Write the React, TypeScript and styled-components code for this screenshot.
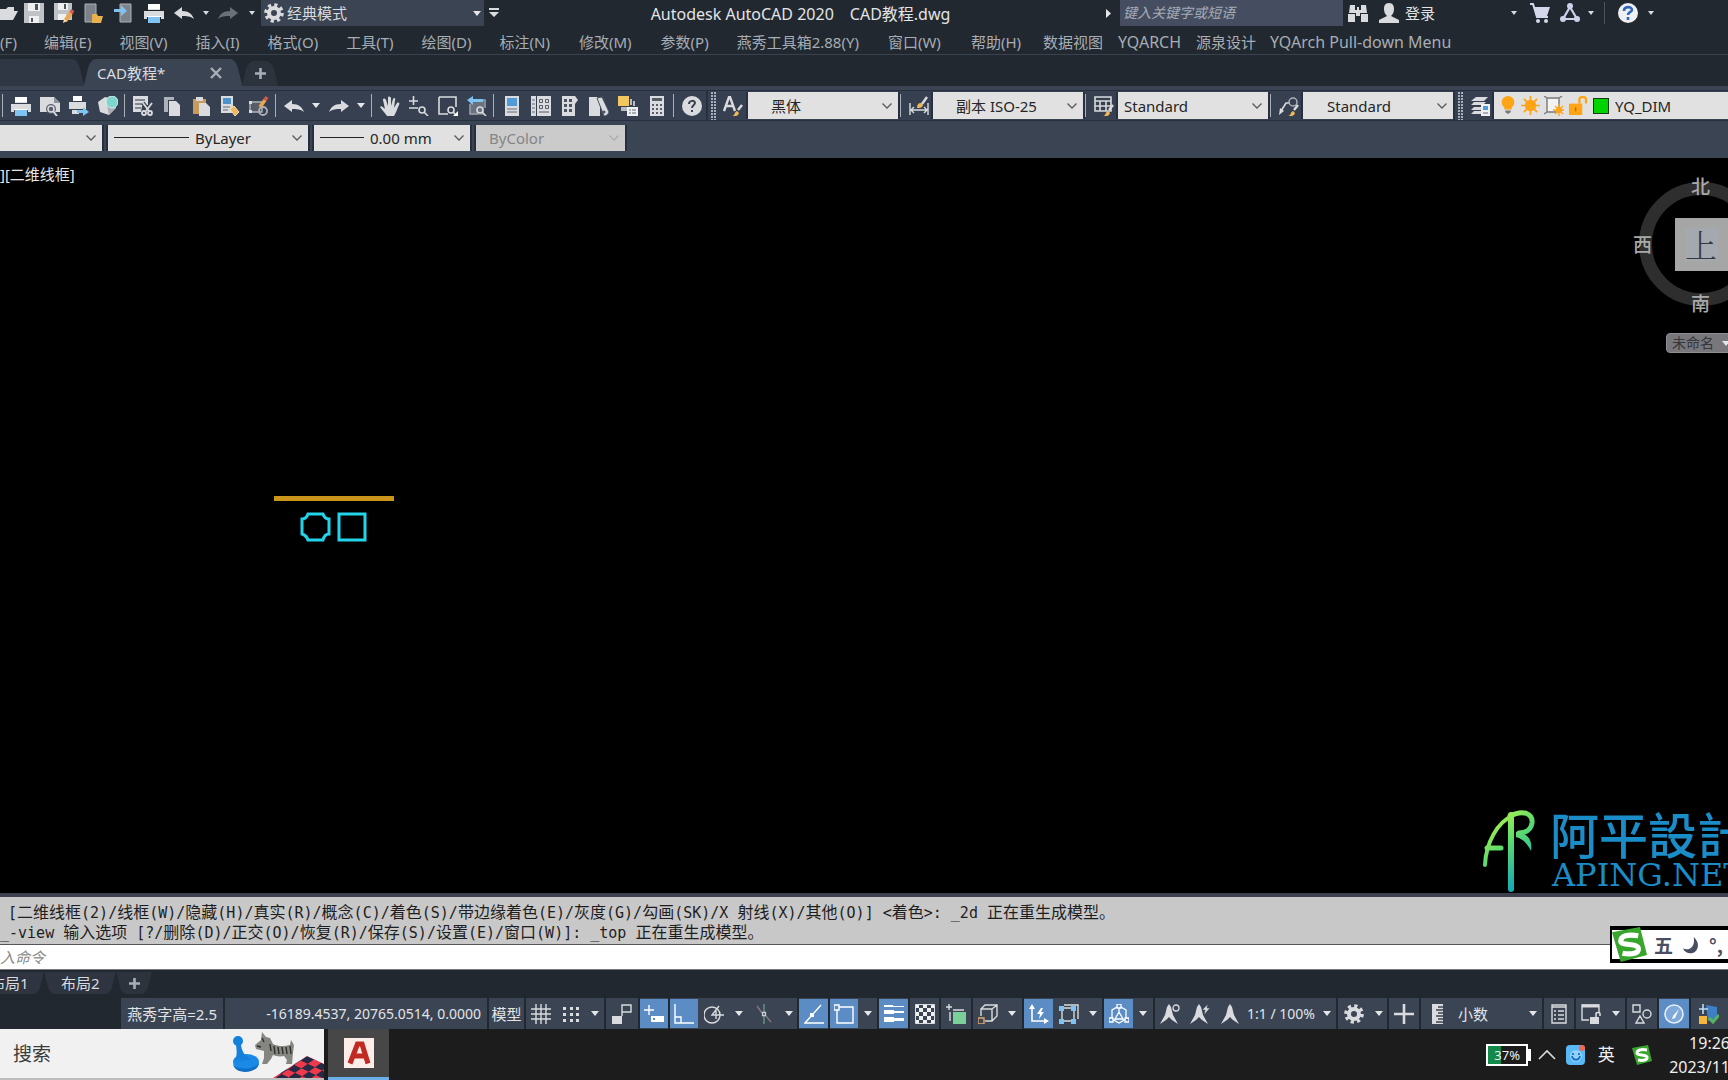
import React from "react";
import styled, { createGlobalStyle, css } from "styled-components";

const UI = `"Noto Sans", "Noto Sans CJK SC", sans-serif`;
const MONO = `"DejaVu Sans Mono", "Noto Sans CJK SC", monospace`;
const L = "#d9dbde";
const B = "#7fc3f2";
const O = "#efb65c";
const CHROME = "#212830";
const PANEL = "#3b4453";

const Global = createGlobalStyle`
  * { box-sizing: border-box; }
  html, body { margin: 0; height: 100%; overflow: hidden; background: #000; }
  button, input, select { font: inherit; color: inherit; border: 0; background: none; padding: 0; margin: 0; outline: 0; }
  button { white-space: nowrap; }
  select { appearance: none; }
  svg { display: block; flex: none; }
`;

const printer = (
  <>
    <path fill={L} d="M4 1h12v6H4z" />
    <path fill={L} d="M0 8h20v8h-3v-3H3v3H0z" />
    <path fill="#fff" d="M4 1h12v5H4z" />
    <path fill="#fff" d="M3 13h14v1H3z" />
    <path fill={B} d="M4 14h12v6H4z" />
  </>
);
const brush = (
  <>
    <path stroke={L} strokeWidth="2.4" d="M19 9l-4 5" />
    <path fill={O} d="M9 20c3 0 2-4 5-5l2 2c-1 3-4 4-7 3z" />
  </>
);
const pencil = (
  <>
    <path stroke="#e9a64e" strokeWidth="4" d="M11 18l6-8" />
    <path stroke="#d95745" strokeWidth="4" d="M17 10l2-3" />
    <path fill="#f3e2c4" d="M9 20l1-4 3 2z" />
  </>
);
const magnifier = (
  <g fill="none" stroke={L} strokeWidth="1.6">
    <circle cx="13" cy="14" r="3" />
    <path d="M15 16l4 4" />
  </g>
);
const undo = <path fill={L} d="M0 10l8-6v4c7 0 10 3 12 8-4-3-7-3-12-3v3z" />;
const redo = <path fill={L} d="M20 10l-8-6v4C5 8 2 11 0 16c4-3 7-3 12-3v3z" />;
const gear = (
  <>
    <circle cx="10" cy="10" r="5" fill="none" stroke={L} strokeWidth="4" />
    <circle cx="10" cy="10" r="8" fill="none" stroke={L} strokeWidth="3.6" strokeDasharray="3.2 3.08" />
  </>
);
const person = (
  <path fill={L} d="M10 0l2 3 2 8 5 9-6-4-3-3-3 3-6 4 5-9 2-8z" />
);

const icons: Record<string, React.ReactNode> = {
  folder: <path fill={L} d="M0 6h8l2-2h6v4h4l-5 9H0z" />,
  save: (
    <>
      <path fill="#bfc2c6" d="M0 0h20v20H0z" />
      <path fill="#eef0f2" d="M4 0h12v8H4zM5 13h10v7H5z" />
      <path fill="#50565f" d="M11 1h3v6h-3zM7 15h2v4H7z" />
    </>
  ),
  saveAs: (
    <>
      <path fill="#bfc2c6" d="M0 0h18v17H0z" />
      <path fill="#eef0f2" d="M4 0h10v7H4zM4 11h8v6H4z" />
      <path fill="#50565f" d="M10 1h2v5h-2z" />
      {pencil}
    </>
  ),
  openMobile: (
    <>
      <path fill="#7d828a" stroke="#aeb2b8" d="M2 1h11v18H2z" />
      <path fill="#e8b14e" d="M9 11h5l1 2h5l-2 7H9z" />
    </>
  ),
  saveMobile: (
    <>
      <path fill="#7d828a" stroke="#aeb2b8" d="M6 1h11v18H6z" />
      <path fill={B} d="M0 6h7V2l6 6-6 5V9H0z" />
    </>
  ),
  print: printer,
  undo,
  redo,
  redoDim: <g opacity=".4">{redo}</g>,
  gear,
  preview: (
    <>
      <path fill={L} d="M0 1h14l6 6v9H0z" />
      <path fill="#8d939c" d="M14 1l6 6h-6z" />
      <circle cx="11" cy="13" r="5" fill="#59616e" />
      <circle cx="11" cy="13" r="3" fill="none" stroke={L} strokeWidth="1.6" />
      <path stroke={L} strokeWidth="2" d="M13 15l4 5" />
    </>
  ),
  plot: (
    <>
      <path fill="#fff" d="M4 0h9v5H4z" />
      <path fill={L} d="M0 6h17v7H0zM3 14h7v4H3z" />
      <path fill={B} d="M8 14h6v-3l6 5-6 4v-3H8z" />
    </>
  ),
  cube3d: (
    <>
      <path fill={L} d="M0 6l7-5 8 2 3 9-7 7-9-3z" />
      <path fill="#a9adb2" d="M9 9l9 2-7 8z" />
      <circle cx="14" cy="6" r="6" fill="#7fd6cf" stroke="#d7efec" />
    </>
  ),
  cut: (
    <>
      <path fill={L} d="M0 0h15v9l-6 1-1 6H0z" />
      <path stroke="#666d77" strokeWidth="1.4" d="M2 4h10M2 8h8M2 12h6" />
      <g fill="none" stroke={L} strokeWidth="1.8">
        <path stroke={PANEL} strokeWidth="4" d="M10 7l6 8M19 7l-6 8" />
        <path d="M10 7l6 8M19 7l-6 8" />
        <circle cx="11" cy="17" r="2" />
        <circle cx="17" cy="17" r="2" />
      </g>
    </>
  ),
  copy: (
    <>
      <path fill="#aeb2b8" d="M2 1h10v3H6v12H2z" />
      <path fill={L} d="M7 5h7l4 4v11H7z" />
    </>
  ),
  paste: (
    <>
      <path fill="#c79a5e" d="M2 3h13v15H2z" />
      <path fill={L} d="M5 1h7v4H5zM8 7h7l4 4v9H8z" />
    </>
  ),
  match: (
    <>
      <path fill={L} d="M1 0h12v17H1z" />
      <path fill="#4b93cf" d="M3 2h8v6H3z" />
      <path stroke="#666d77" d="M3 11h7M3 14h5" />
      <path fill={O} stroke="#f4ddb3" d="M10 13l4-3 5 6-4 4z" />
    </>
  ),
  blockEdit: (
    <>
      <path fill="#565d69" stroke="#aeb2b8" strokeWidth="1.4" d="M1 6h12v10H1z" />
      <path fill={L} d="M0 5h3v3H0zM0 14h3v3H0z" />
      <circle cx="14" cy="15" r="4" fill="none" stroke="#aeb2b8" strokeWidth="1.8" />
      <path stroke="#e9a64e" strokeWidth="3.6" d="M11 11l5-7" />
      <path stroke="#d95745" strokeWidth="3.6" d="M16 4l2-3" />
    </>
  ),
  hand: (
    <path
      fill={L}
      d="M7 20c-2-3-5-6-7-9 1-2 3 0 5 2L3 4c0-2 2-2 3 0l2 6V2c0-2 2-2 3 0v8l2-7c1-2 3-1 2 1l-1 8 3-5c2-1 3 0 2 2-2 4-3 8-5 11z"
    />
  ),
  zoomPm: (
    <>
      <path stroke={L} strokeWidth="1.6" d="M0 5h9M4.500 0v9M0 12h9" />
      {magnifier}
    </>
  ),
  zoomWin: (
    <>
      <path fill="none" stroke={L} strokeWidth="1.6" d="M1 1h17v10M1 1v17h9" />
      {magnifier}
      <path fill="#fff" d="M20 15v5h-5z" />
    </>
  ),
  zoomPrev: (
    <>
      <path fill="#6b727d" d="M3 5h14v14H3z" />
      <path fill="none" stroke="#979da6" strokeWidth="1.6" d="M10 4h8v8M3 8v10h8" />
      <path fill={B} d="M0 4l6-4v3h10v3H6v3z" />
      {magnifier}
    </>
  ),
  props: (
    <>
      <path fill={L} d="M3 0h14v20H3z" />
      <path fill="#4f9ad8" d="M5 2h10v8H5z" />
      <path stroke="#666d77" d="M5 13h10M5 16h10" />
    </>
  ),
  designCenter: (
    <>
      <path fill={L} d="M0 0h5v20H0zM6 0h14v20H6z" />
      <path stroke="#666d77" d="M1 4h3M1 8h3M1 12h3M1 16h3" />
      <path fill="none" stroke="#555d69" d="M8.500 3.500h3v3h-3zM14.500 3.500h3v3h-3zM8.500 9.500h3v3h-3zM14.500 9.500h3v3h-3zM8 16h10" />
    </>
  ),
  palettes: (
    <>
      <path fill={L} d="M2 0h13l3 4-3 4v12H2z" />
      <path fill="#4c5461" d="M4 3h3v3H4zM9 3h3v3H9zM4 8h3v3H4zM9 8h3v3H9zM4 13h3v3H4zM9 13h3v3H9z" />
    </>
  ),
  sheetSet: (
    <>
      <path fill={L} d="M0 1h8l3 3v16H0z" />
      <path fill={L} stroke="#4c5461" d="M8 2l5-1 7 15c-1 3-3 4-5 4z" />
      <circle cx="15" cy="16" r="1.500" fill="#4c5461" />
    </>
  ),
  markup: (
    <>
      <path fill="#f3c65f" d="M0 0h11v10H0z" />
      <path fill="#b9bdc2" d="M3 11h7v4H3zM12 3h2v6h-2zM15 5h2v5h-2z" />
      <path fill="#eef0f2" d="M9 11h11v9H9z" />
      <path stroke="#666d77" d="M11 14h2M14 14h4M11 17h2M14 17h4" />
    </>
  ),
  calc: (
    <>
      <path fill={L} d="M3 0h14v20H3z" />
      <path fill="#555d69" d="M5 2h10v3H5zM5 8h2v2H5zM9 8h2v2H9zM13 8h2v2h-2zM5 12h2v2H5zM9 12h2v2H9zM13 12h2v2h-2zM5 16h2v2H5zM9 16h2v2H9zM13 16h2v2h-2z" />
    </>
  ),
  helpRound: (
    <>
      <circle cx="10" cy="10" r="10" fill={L} />
      <path fill="none" stroke="#39424f" strokeWidth="2" d="M7 8c0-4 6-4 6-1 0 2-3 2-3 5M10 14v2" />
    </>
  ),
  textStyle: (
    <>
      <path fill="none" stroke={L} strokeWidth="2.400" d="M1 15L6 1h1l5 14M3 10h7" />
      {brush}
    </>
  ),
  dimStyle: (
    <>
      <path fill="none" stroke={L} strokeWidth="1.400" d="M1 7v12M19 7v12M2 14h16M5 11l-3 3 3 3M15 11l3 3-3 3" />
      <path fill={O} d="M8 12c0-4 2-5 4-5l2 2c-1 3-3 3-6 3z" />
      <path stroke={L} strokeWidth="2.400" d="M13 8l5-7" />
    </>
  ),
  tableStyle: (
    <>
      <path fill="none" stroke={L} strokeWidth="1.600" d="M1 1h16v14H1zM1 5h16M1 10h16M6 5v10M12 5v10" />
      {brush}
    </>
  ),
  leaderStyle: (
    <>
      <path fill="none" stroke={L} strokeWidth="1.600" d="M2 15l5-8h4" />
      <path fill={L} d="M0 19l1-7 4 3z" />
      <circle cx="14" cy="6" r="4" fill="none" stroke="#aeb2b8" strokeWidth="1.500" />
      {brush}
    </>
  ),
  layers: (
    <>
      <path fill={L} d="M6 1h12l-4 4H1zM4 6h12l-3 3H1zM4 11h7v3H1zM4 15h7v3H1z" />
      <path fill="#eef0f2" d="M11 8h9v12h-9z" />
      <path fill="#4f9ad8" d="M13 10h5v4h-5z" />
      <path stroke="#666d77" d="M13 17h5" />
    </>
  ),
  bulb: (
    <>
      <circle cx="10" cy="7" r="7" fill="#ffa415" />
      <path fill="#ffa415" d="M6 11h8v4H6z" />
      <path fill="#77797c" d="M7 16h6v2l-3 2-3-2z" />
    </>
  ),
  sun: (
    <>
      <circle cx="10" cy="10" r="6" fill="#ffa415" />
      <path stroke="#ffa415" strokeWidth="1.800" d="M10 0v20M0 10h20M3 3l14 14M17 3L3 17" />
    </>
  ),
  vpFreeze: (
    <>
      <path fill="#f3f3f3" stroke="#77797c" strokeWidth="1.400" d="M3 2h12v14H3zM0 0l3 2M18 0l-3 2M0 18l3-2" />
      <circle cx="15" cy="14" r="3" fill="#ffa415" />
      <path stroke="#ffa415" strokeWidth="1.300" d="M15 8v12M9 14h11M11 10l8 8M19 10l-8 8" />
    </>
  ),
  unlock: (
    <>
      <path fill="#ffa415" d="M1 8h14v12H1z" />
      <path fill="none" stroke="#ffa415" strokeWidth="2.400" d="M12 8V4c0-4 7-4 7 0v4" />
      <path stroke="#b36f00" strokeWidth="1.500" d="M8 12v4" />
    </>
  ),
  binoculars: (
    <>
      <path fill={L} d="M2 2h5v5h2V4h2v3h2V2h5l1 8H1z" />
      <path fill={L} d="M0 11h7v8H0zM13 11h7v8h-7zM8 8h4v5H8z" />
    </>
  ),
  user: (
    <path fill={L} d="M10 0c4 0 5 3 5 6s-1 5-3 7l8 4v3H0v-3l8-4C6 11 5 9 5 6s1-6 5-6z" />
  ),
  cart: (
    <>
      <path fill="#d5d8ea" d="M4 4h16l-3 9H6z" />
      <path fill="none" stroke="#d5d8ea" strokeWidth="2" d="M0 1h3l4 13h11" />
      <circle cx="8" cy="18" r="2" fill="#d5d8ea" />
      <circle cx="16" cy="18" r="2" fill="#d5d8ea" />
    </>
  ),
  a360: (
    <>
      <path fill="none" stroke="#cdd1ea" strokeWidth="2.200" d="M10 4l7 12H3z" />
      <circle cx="10" cy="3" r="3" fill="#cdd1ea" />
      <circle cx="3" cy="16" r="3" fill="#cdd1ea" />
      <circle cx="17" cy="16" r="3" fill="#cdd1ea" />
    </>
  ),
  help: (
    <>
      <circle cx="10" cy="10" r="10" fill="#eef0f4" />
      <path fill="none" stroke="#2f66b8" strokeWidth="2.600" d="M6 8c0-5 8-5 8-1 0 2-4 2-4 5M10 14v3" />
    </>
  ),
  grid: <path stroke={L} strokeWidth="1.400" d="M5 0v20M10 0v20M15 0v20M0 5h20M0 10h20M0 15h20" />,
  dots: (
    <path fill={L} d="M2 3h3v3H2zM9 3h3v3H9zM15 3h3v3h-3zM2 9h3v3H2zM9 9h3v3H9zM15 9h3v3h-3zM2 15h3v3H2zM9 15h3v3H9zM15 15h3v3h-3z" />
  ),
  infer: (
    <>
      <path fill={L} d="M0 12h10v8H0z" />
      <path fill="none" stroke={L} strokeWidth="1.400" d="M10 12V1h9v7h-9" />
    </>
  ),
  dynInput: (
    <>
      <path stroke="#fff" strokeWidth="1.400" d="M0 6h10M5 1v10" />
      <path fill="#fff" d="M7 12h13v6H7z" />
      <path fill="#5b8cc4" d="M9 14h2v2H9z" />
    </>
  ),
  ortho: <path fill="none" stroke="#fff" strokeWidth="1.400" d="M1 0v19h19M1 13h6v6" />,
  polar: (
    <g fill="none" stroke={L} strokeWidth="1.400">
      <circle cx="8" cy="11" r="8" />
      <path d="M15 2l-7 9h12M12 6v9" />
    </g>
  ),
  iso: (
    <>
      <path stroke="#8a7780" strokeWidth="1.300" d="M3 2l5 7M12 12l5 6" />
      <path stroke="#6d9a8e" strokeWidth="1.300" d="M10 0v8M10 12v8" />
      <path fill="none" stroke="#c9ccd1" strokeWidth="1.300" d="M8.500 8.500h3v3h-3z" />
    </>
  ),
  track: (
    <>
      <path fill="none" stroke="#fff" strokeWidth="1.400" d="M17 1L1 19h19" />
      <path fill="#fff" d="M6 9h4v4H6z" />
    </>
  ),
  osnap: <path fill="none" stroke="#fff" strokeWidth="1.400" d="M0 1h5v5H0zM5 3h14v16H3V6" />,
  lineweight: (
    <path fill="#fff" d="M0 1h9v2H0zM9 2h11v1H9zM0 6h10v4H0zM10 7h10v2H10zM0 13h10v5H0zM10 14h10v3H10z" />
  ),
  checker: (
    <>
      <defs>
        <pattern id="check" width="8" height="8" patternUnits="userSpaceOnUse">
          <path fill="#eef0f2" d="M0 0h4v4H0zM4 4h4v4H4z" />
        </pattern>
      </defs>
      <path fill="url(#check)" stroke={L} d="M.5.5h19v19H.5z" />
    </>
  ),
  cycle: (
    <>
      <path fill="#7bd09a" d="M7 8h13v12H7z" />
      <path fill="none" stroke={L} strokeWidth="1.400" d="M4 8v9M7 6h11M0 3h6M3 0v6" />
    </>
  ),
  osnap3d: (
    <>
      <path fill="none" stroke={L} strokeWidth="1.400" d="M3 12V5h11v12H7M3 5l4-4h12v11l-5 5M14 5l5-4" />
      <path fill="none" stroke="#e0a672" strokeWidth="1.400" d="M0 14h6v6H0z" />
    </>
  ),
  ucs: (
    <>
      <path fill="none" stroke="#fff" strokeWidth="1.600" d="M3 4v13h13" />
      <path fill="#fff" d="M3 0l3 5H0zM20 17l-5 3v-6zM12 4l-4 6h3l-1 5 5-7h-3l2-4z" />
    </>
  ),
  filter3d: (
    <>
      <path fill="none" stroke={L} strokeWidth="1.400" d="M3 4h12v13H3zM5 1h14v14" />
      <path fill={B} d="M0 2h5v5H0zM12 2h5v5h-5zM0 15h5v5H0zM12 15h5v5h-5z" />
    </>
  ),
  gizmo: (
    <>
      <path fill="none" stroke="#fff" strokeWidth="1.300" d="M10 2l7 4v9l-7 4-7-4V6zM10 8l4 7H6zM10 8V3M6 15l-4 2M14 15l4 2" />
      <path fill="#5b8cc4" stroke="#fff" strokeWidth="1.300" d="M8 0h4v4H8zM0 14h4v4H0zM16 14h4v4h-4z" />
    </>
  ),
  annoVis: (
    <>
      <g transform="translate(-1 0)">{person}</g>
      <circle cx="16" cy="4" r="3" fill={PANEL} stroke={L} strokeWidth="1.300" />
    </>
  ),
  annoAuto: (
    <>
      <g transform="translate(-1 0)">{person}</g>
      <path fill={L} stroke={PANEL} strokeWidth=".6" d="M18 0l-6 6h3l-1 5 6-7h-3z" />
    </>
  ),
  anno: person,
  plus: <path stroke={L} strokeWidth="2.600" d="M10 0v20M0 10h20" />,
  ruler: (
    <>
      <path fill={L} d="M5 0h11v20H5z" />
      <path stroke={PANEL} strokeWidth="1.400" d="M11 3h5M9 6h7M11 9h5M9 12h7M11 15h5M9 18h7" />
    </>
  ),
  quickProps: (
    <>
      <path fill="none" stroke={L} strokeWidth="1.400" d="M3 1h14v18H3z" />
      <path stroke={L} strokeWidth="1.600" d="M3 3h14M5 7h2M9 7h6M5 11h2M9 11h6M5 15h2M9 15h6" />
    </>
  ),
  lockUi: (
    <>
      <path fill="none" stroke={L} strokeWidth="1.400" d="M8 16H1V1h17v8" />
      <path stroke={L} strokeWidth="3" d="M1 2h17" />
      <path fill={L} d="M9 13h9v7H9z" />
      <path fill="none" stroke={L} strokeWidth="1.600" d="M15 13v-3c0-2 4-2 4 0v2" />
    </>
  ),
  isolate: (
    <g fill="none" stroke={L} strokeWidth="1.400">
      <path d="M1 1h7v7H1zM8 12l4 7H4z" />
      <circle cx="15" cy="10" r="4" />
    </g>
  ),
  perf: (
    <>
      <circle cx="10" cy="10" r="9" fill="#7fa9d8" stroke="#e4eefa" strokeWidth="1.600" />
      <path fill="#fff" d="M15 5l-4 9-3 1 1-3z" />
    </>
  ),
  clean: (
    <>
      <path fill="#3f7fc4" d="M7 1l11 2v12l-9 2z" />
      <path stroke="#bcdcf6" strokeWidth="1.600" d="M0 5h9M4 0v10" />
      <path fill="#f5b63c" d="M0 12h8v8H0z" />
      <path fill="none" stroke="#56b35c" strokeWidth="3" d="M10 14l4 4 6-7" />
    </>
  ),
  chevronUp: <path fill="none" stroke={L} strokeWidth="1.600" d="M2 14l8-8 8 8" />,
  smile: (
    <>
      <rect width="19" height="20" rx="4" fill="#59b9f4" />
      <circle cx="10" cy="11" r="6" fill="#8fd3fa" />
      <path fill="none" stroke="#1c6fc0" strokeWidth="1.800" d="M6 11c1 5 7 5 8 0M7 8v2M13 8v2" />
      <circle cx="16" cy="3" r="3" fill="#ee6a4f" />
    </>
  ),
  sogou: (
    <>
      <path fill="#38a52c" d="M0 3l16-3 4 16-15 4z" />
      <path fill="none" stroke="#fff" strokeWidth="3" d="M15 5C9 4 5 5 5 8s9 1 10 4-4 4-9 3" />
    </>
  ),
  moon: <path fill="#4a4e63" d="M13 1c7 6 6 15-1 18-5 1-9-1-11-5 8 3 14-3 12-13z" />,
  autocad: (
    <>
      <path fill="#fbeee8" d="M0 0h20v20H0z" />
      <path fill="none" stroke="#c02a22" strokeWidth="3.400" d="M4 17L9 4h3l4 13M6 12h8" />
    </>
  ),
};

const Icon = ({ name, size = 20 }: { name: string; size?: number }) => (
  <svg width={size} height={size} viewBox="0 0 20 20" fill="none" aria-hidden="true">
    {icons[name]}
  </svg>
);
const Caret = () => (
  <svg width="8" height="5" viewBox="0 0 8 5" aria-hidden="true">
    <path fill="#e4e6e9" d="M0 0h8L4 5z" />
  </svg>
);
const SmallCaret = () => (
  <svg width="6" height="4" viewBox="0 0 6 4" aria-hidden="true">
    <path fill="#d9dbde" d="M0 0h6L3 4z" />
  </svg>
);

const Page = styled.div`
  display: flex;
  flex-direction: column;
  height: 100vh;
  overflow: hidden;
  background: #000;
  font: 15px/20px ${UI};
  color: #d9dbde;
`;
const Cell = styled.button<{ $w?: number; $on?: boolean }>`
  flex: none;
  display: flex;
  align-items: center;
  justify-content: center;
  width: ${(p) => p.$w ?? 29}px;
  height: 100%;
  ${(p) => p.$on && css`background: #5b8cc4; box-shadow: inset 0 -1px #3b4453, inset 0 1px #3b4453;`}
`;

/* title bar */
const TitleBar = styled.header`
  display: flex;
  height: 26px;
  background: ${CHROME};
`;
const Workspace = styled.label`
  flex: none;
  display: flex;
  align-items: center;
  gap: 3px;
  width: 223px;
  padding: 0 3px;
  background: ${PANEL};
  select { flex: 1; }
`;
const Title = styled.h1`
  flex: 1;
  display: flex;
  justify-content: center;
  align-items: center;
  gap: 16px;
  margin: 0;
  padding-top: 2px;
  font: inherit;
  font-size: 16px;
  color: #e2e4e7;
`;
const SearchBox = styled.input`
  width: 223px;
  padding: 0 3px;
  background: #454e60;
  font-size: 14px;
  font-style: italic;
  &::placeholder { color: #a4abb8; opacity: 1; }
`;
const Account = styled.button`
  display: flex;
  align-items: center;
  justify-content: space-between;
  width: 120px;
  padding-right: 8px;
  color: #e2e4e7;
`;
const Rule = styled.i`
  width: 1px;
  height: 22px;
  margin: 2px 7px 0;
  background: #4b535f;
`;
const TitleEnd = styled.div`
  width: 70px;
`;

/* menus */
const MenuBar = styled.nav`
  display: flex;
  height: 29px;
  padding-top: 3px;
  background: ${CHROME};
  border-bottom: 1px solid #3a424d;
  color: #a7adb4;
`;
const MenuItem = styled.button<{ $gap: number; $latin: boolean }>`
  flex: none;
  margin-right: ${(p) => p.$gap}px;
  font-size: ${(p) => (p.$latin ? 16 : 15)}px;
`;

/* file tabs */
const TabRow = styled.div<{ $flip?: boolean }>`
  display: flex;
  align-items: ${(p) => (p.$flip ? "flex-start" : "flex-end")};
  height: ${(p) => (p.$flip ? 28 : 31)}px;
  padding-top: ${(p) => (p.$flip ? 2 : 0)}px;
  background: ${CHROME};
`;
const Tab = styled.div<{ $w: number; $h: number; $bg: string; $flip?: boolean; $first?: boolean }>`
  position: relative;
  z-index: 0;
  flex: none;
  display: flex;
  align-items: center;
  justify-content: space-between;
  width: ${(p) => p.$w}px;
  height: ${(p) => p.$h}px;
  &::before, &::after {
    content: "";
    position: absolute;
    z-index: -1;
    inset: 0 8px 0 ${(p) => (p.$first ? -12 : 3)}px;
    background: ${(p) => p.$bg};
    border-radius: ${(p) => (p.$flip ? "0 0 6px 6px" : "8px 8px 0 0")};
    transform: skewX(${(p) => (p.$flip ? 14 : -14)}deg);
  }
  &::after {
    inset: 0 3px 0 8px;
    transform: skewX(${(p) => (p.$flip ? -14 : 14)}deg);
  }
`;
const TabLabel = styled.button<{ $start: number }>`
  margin: 0 auto 0 ${(p) => p.$start}px;
  color: #d9dbde;
`;
const TabIcon = styled.button`
  display: flex;
  margin: 0 auto;
`;
const TabClose = styled.button`
  margin-right: 20px;
`;

/* toolbars */
const Toolbars = styled.section`
  display: flex;
  flex-direction: column;
  gap: 5px;
  padding: 5px 0 7px;
  background: ${PANEL};
`;
const Toolbar = styled.div`
  display: flex;
  height: 29px;
  background: #374050;
  box-shadow: 0 0 0 1px #273040;
`;
const PropBar = styled.div`
  display: flex;
  gap: 6px;
  height: 26px;
`;
const Sep = styled.i`
  flex: none;
  width: 6px;
  margin: 3px 0;
  background: linear-gradient(#aab0b8, #aab0b8) 2px 0 / 1px 100% no-repeat;
`;
const Grip = styled.i`
  flex: none;
  width: 12px;
  border-left: 2px solid #273040;
  background: radial-gradient(circle at 1px 1px, #a9afb8 1px, transparent 1px) 3px 4px / 3px 3px repeat-y,
    radial-gradient(circle at 1px 1px, #a9afb8 1px, transparent 1px) 6px 4px / 3px 3px repeat-y;
`;
const ComboBox = styled.label<{ $w?: number; $pad: number; $off?: boolean }>`
  flex: ${(p) => (p.$w ? "none" : "1")};
  display: flex;
  align-items: center;
  gap: 6px;
  width: ${(p) => (p.$w ? `${p.$w}px` : "auto")};
  height: 27px;
  margin-top: 1px;
  padding: 0 5px 0 ${(p) => p.$pad}px;
  background: ${(p) => (p.$off ? "#cbcbcb" : "#e1e1e1")};
  color: ${(p) => (p.$off ? "#858585" : "#262626")};
  box-shadow: 2px 0 #273040, -2px 0 #273040;
  select { flex: 1; min-width: 0; opacity: 1; }
  ${PropBar} & { height: 26px; margin: 0; }
`;
const Swatch = styled.i`
  width: 16px;
  height: 16px;
  border: 1px solid #1b3a1b;
  background: #00d400;
`;
const LayerIcons = styled.span`
  display: flex;
  gap: 4px;
`;

type ComboProps = { label: string; value: string; w?: number; pad: number; off?: boolean; line?: number; children?: React.ReactNode; open?: boolean };
const Combo = ({ label, value, w, pad, off, line, children, open }: ComboProps) => (
  <ComboBox $w={w} $pad={pad} $off={off}>
    {line && (
      <svg width={line} height="2" aria-hidden="true">
        <path stroke="#222" strokeWidth="1" d={`M0 .5h${line}`} />
      </svg>
    )}
    {children}
    <select aria-label={label} disabled={off}>
      <option>{value}</option>
    </select>
    {!open && (
      <svg width="12" height="8" viewBox="0 0 12 8" aria-hidden="true">
        <path fill="none" stroke={off ? "#adadad" : "#5a5a5a"} strokeWidth="1.300" d="M1.500 1.500L6 6l4.500-4.500" />
      </svg>
    )}
  </ComboBox>
);

/* drawing area */
const Canvas = styled.main`
  position: relative;
  flex: 1;
  min-height: 0;
  overflow: hidden;
  background: #000;
`;
const ViewLabel = styled.button`
  position: absolute;
  left: 0;
  top: 6px;
  color: #e6e6e6;
`;
const Entities = styled.svg`
  position: absolute;
  left: 274px;
  top: 337px;
`;
const ViewCube = styled.div`
  position: absolute;
  right: -35px;
  top: 24px;
  width: 124px;
  height: 124px;
  border: 13px solid #2e2e2e;
  border-radius: 50%;
  display: grid;
  place-items: center;
`;
const CubeFace = styled.button`
  width: 53px;
  height: 53px;
  border: 10px solid #a6a6a6;
  background: #a3a9af;
  color: #33393f;
  font: 32px/32px "Noto Serif CJK SC", "Noto Sans CJK SC", serif;
  font-weight: 300;
`;
const Compass = styled.button<{ $x: number; $y: number }>`
  position: absolute;
  left: ${(p) => p.$x}px;
  top: ${(p) => p.$y}px;
  font: 500 19px/20px "Noto Sans CJK SC", sans-serif;
  color: #a9a9a9;
`;
const UcsMenu = styled.button`
  position: absolute;
  right: -8px;
  top: 175px;
  display: flex;
  align-items: center;
  gap: 8px;
  width: 70px;
  height: 20px;
  padding-left: 5px;
  border: 1px solid #8e8e93;
  border-radius: 4px;
  background: #77777c;
  color: #36363c;
  font-size: 14px;
`;
const Watermark = styled.div`
  position: absolute;
  right: -24px;
  bottom: 0;
  display: flex;
  gap: 14px;
  width: 269px;
  height: 83px;
  color: #1a8dc8;
`;
const MarkText = styled.div`
  flex: none;
  white-space: nowrap;
`;
const MarkName = styled.div`
  font: 500 49px/46px "Noto Sans CJK TC", sans-serif;
`;
const MarkUrl = styled.div`
  padding-left: 2px;
  font: 32px/38px "DejaVu Serif", serif;
`;

/* command window */
const CommandArea = styled.section`
  position: relative;
  flex: none;
  border-top: 4px solid #3c404c;
  background: #c8c8c8;
`;
const History = styled.div`
  height: 48px;
  padding-top: 6px;
  border-bottom: 1px solid #55565a;
  color: #1e1e1e;
  font: 15px/20px ${MONO};
`;
const HistoryLine = styled.p<{ $indent: number }>`
  height: 20px;
  margin: 0;
  padding-left: ${(p) => p.$indent}px;
  white-space: pre;
  overflow: hidden;
`;
const Han = styled.span`
  font-size: 16px;
`;
const CommandInput = styled.input`
  display: block;
  width: 100%;
  height: 25px;
  background: #fff;
  border-bottom: 1px solid #77797e;
  font-style: italic;
  &::placeholder { color: #8a8a8a; opacity: 1; }
`;
const Ime = styled.div`
  position: absolute;
  right: 0;
  top: 29px;
  display: flex;
  align-items: center;
  width: 118px;
  height: 37px;
  background: #fff;
  border: solid #000;
  border-width: 4px 0 4px 2px;
  gap: 9px;
  color: #4a4e63;
  font: 700 19px/24px "Noto Sans CJK SC", sans-serif;
`;
const ImeLogo = styled.span`
  margin: -2px -2px -1px 0;
`;

/* status bar */
const StatusBar = styled.footer`
  flex: none;
  display: flex;
  gap: 2px;
  height: 31px;
  padding-left: 121px;
  background: ${CHROME};
  color: #e2e4e7;
`;
const Group = styled.div<{ $grow?: boolean }>`
  flex: ${(p) => (p.$grow ? 1 : "none")};
  display: flex;
  align-items: center;
  background: ${PANEL};
`;
const Readout = styled.span<{ $w: number }>`
  width: ${(p) => p.$w}px;
  padding-right: 6px;
  font-size: ${(p) => (p.$w > 200 ? 14 : 15)}px;
  text-align: right;
  white-space: nowrap;
`;
const Flat = styled.button<{ $w: number }>`
  width: ${(p) => p.$w}px;
  text-align: center;
  font-size: ${(p) => (p.$w > 40 ? 14 : 15)}px;
`;
const Units = styled.select`
  width: 71px;
  padding-left: 5px;
`;

/* task bar */
const TaskBar = styled.footer`
  flex: none;
  display: flex;
  height: 51px;
  background: #1c1c1c;
  color: #f0f0f0;
`;
const TaskSearch = styled.label`
  display: flex;
  width: 324px;
  background: #f1f1f1;
  border-bottom: 2px solid #bdbdbd;
  input { width: 219px; padding-left: 13px; color: #3d3d3d; font-size: 19px; }
  input::placeholder { color: #3d3d3d; opacity: 1; }
`;
const TaskApp = styled.button`
  display: grid;
  place-items: center;
  width: 61px;
  margin-left: 4px;
  background: #474747;
  border-bottom: 3px solid #6cb0ea;
`;
const Tray = styled.div`
  display: flex;
  align-items: center;
  margin: 0 -2px 0 auto;
`;
const Battery = styled.span`
  position: relative;
  width: 42px;
  height: 22px;
  border: 2px solid #fff;
  background: linear-gradient(90deg, #138a4a 13px, #1c1c1c 13px);
  font: 13px/18px ${UI};
  text-align: center;
  &::after {
    content: "";
    position: absolute;
    right: -5px;
    top: 3px;
    width: 3px;
    height: 12px;
    background: #fff;
  }
`;
const Lang = styled.button`
  width: 40px;
  font-size: 17px;
`;
const Clock = styled.time`
  margin-left: 11px;
  text-align: right;
  font-size: 16px;
  line-height: 24px;
`;

const S = ({ n, w, on, label }: { n: string; w?: number; on?: boolean; label?: string }) => (
  <Cell $w={w} $on={on} aria-label={label ?? n}>
    <Icon name={n} />
  </Cell>
);
const C = ({ w }: { w: number }) => (
  <Cell $w={w} aria-label="more">
    <Caret />
  </Cell>
);

const menus: [string, number][] = [
  ["(F)", 27], ["编辑(E)", 28], ["视图(V)", 28], ["插入(I)", 28], ["格式(O)", 28], ["工具(T)", 28],
  ["绘图(D)", 28], ["标注(N)", 29], ["修改(M)", 29], ["参数(P)", 28], ["燕秀工具箱2.88(Y)", 29], ["窗口(W)", 30],
  ["帮助(H)", 22], ["数据视图", 15], ["YQARCH", 15], ["源泉设计", 14], ["YQArch Pull-down Menu", 0],
];

const history: [string, number][] = [
  ["[二维线框(2)/线框(W)/隐藏(H)/真实(R)/概念(C)/着色(S)/带边缘着色(E)/灰度(G)/勾画(SK)/X 射线(X)/其他(O)] <着色>: _2d 正在重生成模型。", 8],
  ["_-view 输入选项 [?/删除(D)/正交(O)/恢复(R)/保存(S)/设置(E)/窗口(W)]: _top 正在重生成模型。", 0],
];
const withHan = (text: string) =>
  text.split(/([\u3000-\u9fff]+)/).map((part, i) => (i % 2 ? <Han key={i}>{part}</Han> : part));

const PlusMark = () => (
  <svg width="11" height="11" viewBox="0 0 11 11" aria-hidden="true">
    <path stroke="#a9aeb6" strokeWidth="2.600" d="M5.500 0v11M0 5.500h11" />
  </svg>
);

const GameArt = () => (
  <svg width="105" height="49" viewBox="0 0 105 49" aria-hidden="true">
    <defs>
      <pattern id="board" width="16" height="16" patternUnits="userSpaceOnUse" patternTransform="matrix(.9 .42 -.8 .56 88 27)">
        <path fill="#262a44" d="M0 0h16v16H0z" />
        <path fill="#ee3a4b" d="M8 0h8v8H8zM0 8h8v8H0z" />
      </pattern>
    </defs>
    <path fill="url(#board)" d="M54 49l34-22 17 8v14z" />
    <ellipse cx="27" cy="33" rx="13" ry="8" fill="#1a8ae6" />
    <path fill="#0f6fc6" d="M14 34c1 8 25 7 26-1 1 12-26 14-26 1z" />
    <path fill="#1480dc" d="M16 32c2-6 2-9 1-16h5c1 7 4 11 10 15z" />
    <circle cx="19" cy="12" r="5" fill="#1480dc" />
    <path
      fill="#85867f"
      d="M36 16l6-5 1-8 4 5 4 1 3 6c6 3 12 2 17 1l1-5 3 5-1 8-1 11h-6l1-4-3-4c-5 1-8 0-11-1l-2 4-4 5h-5l2-6v-7l-8-2z"
    />
    <path stroke="#2d2d2b" strokeWidth="1.400" d="M51 15l1 7M55 17l1 8M59 18l1 7M63 18l1 7M67 18l1 7M71 17l1 8M43 9l2 4M38 17l4 1" />
  </svg>
);

export default function App() {
  return (
    <Page>
      <Global />
      <TitleBar>
        <Cell $w={15} aria-label="open"><Icon name="folder" /></Cell>
        <S n="save" w={38} />
        <S n="saveAs" w={22} />
        <S n="openMobile" w={36} />
        <S n="saveMobile" w={26} />
        <S n="print" w={33} />
        <S n="undo" w={28} />
        <Cell $w={16} aria-label="undo list"><SmallCaret /></Cell>
        <S n="redoDim" w={28} />
        <Cell $w={19} aria-label="redo list"><SmallCaret /></Cell>
        <Workspace>
          <Icon name="gear" />
          <select aria-label="workspace"><option>经典模式</option></select>
          <Caret />
        </Workspace>
        <Cell $w={20} aria-label="customize">
          <svg width="10" height="10" viewBox="0 0 10 10"><path fill={L} d="M0 0h10v2H0zM0 4h10L5 9z" /></svg>
        </Cell>
        <Title><span>Autodesk AutoCAD 2020</span><span>CAD教程.dwg</span></Title>
        <Cell $w={23} aria-label="expand search">
          <svg width="5" height="9" viewBox="0 0 5 9"><path fill="#e4e6e9" d="M0 0v9l5-4.500z" /></svg>
        </Cell>
        <SearchBox aria-label="search" placeholder="键入关键字或短语" />
        <S n="binoculars" w={30} />
        <S n="user" w={32} />
        <Account>登录<SmallCaret /></Account>
        <S n="cart" w={30} />
        <S n="a360" w={30} />
        <Cell $w={12} aria-label="app list"><SmallCaret /></Cell>
        <Rule />
        <S n="help" w={32} />
        <Cell $w={14} aria-label="help list"><SmallCaret /></Cell>
        <TitleEnd />
      </TitleBar>
      <MenuBar>
        {menus.map(([label, gap]) => (
          <MenuItem key={label} $gap={gap} $latin={label.startsWith("YQ")}>{label}</MenuItem>
        ))}
      </MenuBar>
      <TabRow>
        <Tab $w={84} $h={27} $bg="#2f3744" $first />
        <Tab $w={158} $h={27} $bg={PANEL}>
          <TabLabel $start={13}>CAD教程*</TabLabel>
          <TabClose aria-label="close">
            <svg width="12" height="12" viewBox="0 0 12 12"><path stroke="#a9aeb6" strokeWidth="2.400" d="M1 1l10 10M11 1L1 11" /></svg>
          </TabClose>
        </Tab>
        <Tab $w={36} $h={25} $bg="#2c333d"><TabIcon aria-label="new drawing"><PlusMark /></TabIcon></Tab>
      </TabRow>
      <Toolbars>
        <Toolbar>
          <Sep />
          <S n="print" /><S n="preview" /><S n="plot" /><S n="cube3d" />
          <Sep />
          <S n="cut" /><S n="copy" /><S n="paste" /><S n="match" /><S n="blockEdit" />
          <Sep />
          <S n="undo" /><C w={16} /><S n="redo" /><C w={16} />
          <Sep />
          <S n="hand" /><S n="zoomPm" /><S n="zoomWin" /><S n="zoomPrev" />
          <Sep />
          <S n="props" /><S n="designCenter" /><S n="palettes" /><S n="sheetSet" /><S n="markup" /><S n="calc" />
          <Sep />
          <S n="helpRound" />
          <Grip />
          <S n="textStyle" w={30} />
          <Combo label="text style" value="黑体" w={150} pad={23} />
          <Sep />
          <S n="dimStyle" />
          <Combo label="dimension style" value="副本 ISO-25" w={150} pad={23} />
          <Sep />
          <S n="tableStyle" />
          <Combo label="table style" value="Standard" w={150} pad={6} />
          <Sep />
          <S n="leaderStyle" />
          <Combo label="leader style" value="Standard" w={150} pad={24} />
          <Grip />
          <S n="layers" />
          <Combo label="layer" value="YQ_DIM" pad={5} open>
            <LayerIcons>
              <Icon name="bulb" size={18} /><Icon name="sun" size={19} /><Icon name="vpFreeze" /><Icon name="unlock" size={19} />
            </LayerIcons>
            <Swatch />
          </Combo>
        </Toolbar>
        <PropBar>
          <Combo label="color" value="" w={102} pad={5} />
          <Combo label="linetype" value="ByLayer" w={200} pad={6} line={75} />
          <Combo label="lineweight" value="0.00 mm" w={156} pad={6} line={44} />
          <Combo label="plot style" value="ByColor" w={149} pad={13} off />
        </PropBar>
      </Toolbars>
      <Canvas>
        <ViewLabel>][二维线框]</ViewLabel>
        <Entities width="120" height="50" viewBox="0 0 120 50" aria-hidden="true">
          <path fill="#cb951c" d="M0 1h120v5H0z" />
          <path
            fill="none"
            stroke="#22d3ea"
            strokeWidth="3"
            d="M34 19h15c1 3 3 5 6 5v15c-3 0-5 2-6 6H34c-1-3-3-5-6-6V24c3 0 5-2 6-5zM65 19h26v26H65z"
          />
        </Entities>
        <ViewCube>
          <CubeFace>上</CubeFace>
          <Compass $x={39} $y={-19}>北</Compass>
          <Compass $x={-19} $y={39}>西</Compass>
          <Compass $x={39} $y={98}>南</Compass>
        </ViewCube>
        <UcsMenu>未命名<Caret /></UcsMenu>
        <Watermark>
          <svg width="53" height="83" viewBox="0 0 53 83" aria-hidden="true">
            <defs>
              <linearGradient id="mark" gradientUnits="userSpaceOnUse" x1="4" y1="10" x2="48" y2="60">
                <stop offset="0" stopColor="#b6f24a" />
                <stop offset=".45" stopColor="#5fdc6c" />
                <stop offset="1" stopColor="#17adb4" />
              </linearGradient>
            </defs>
            <g fill="none" stroke="url(#mark)" strokeLinecap="round">
              <path strokeWidth="4" d="M2 55C3 32 15 12 29 6" />
              <path strokeWidth="5" d="M27 6c14-7 23-2 22 7-1 7-7 10-13 10" />
              <path strokeWidth="5" d="M4 38h14" />
              <path strokeWidth="6" d="M28 5v74" />
            </g>
            <path fill="url(#mark)" d="M33 22c10 1 17 6 15 19-4-8-8-12-15-14z" />
          </svg>
          <MarkText>
            <MarkName>阿平設計</MarkName>
            <MarkUrl>APING.NET</MarkUrl>
          </MarkText>
        </Watermark>
      </Canvas>
      <CommandArea>
        <History>
          {history.map(([text, indent]) => <HistoryLine key={text} $indent={indent}>{withHan(text)}</HistoryLine>)}
        </History>
        <CommandInput aria-label="command" placeholder="入命令" />
        <Ime>
          <ImeLogo><Icon name="sogou" size={35} /></ImeLogo>
          五
          <Icon name="moon" size={18} />
          <span>°,</span>
        </Ime>
      </CommandArea>
      <TabRow $flip>
        <Tab $w={44} $h={22} $bg="#2e3541" $flip $first><TabLabel $start={-10}>布局1</TabLabel></Tab>
        <Tab $w={72} $h={22} $bg="#2e3541" $flip><TabLabel $start={17}>布局2</TabLabel></Tab>
        <Tab $w={36} $h={22} $bg="#2c333d" $flip><TabIcon aria-label="new layout"><PlusMark /></TabIcon></Tab>
      </TabRow>
      <StatusBar>
        <Group><Readout $w={102}>燕秀字高=2.5</Readout></Group>
        <Group><Readout $w={262}>-16189.4537, 20765.0514, 0.0000</Readout></Group>
        <Group><Flat $w={35}>模型</Flat></Group>
        <Group><S n="grid" /><S n="dots" w={31} /><C w={18} /></Group>
        <Group><S n="infer" w={32} /></Group>
        <Group><S n="dynInput" w={28} on /></Group>
        <Group><S n="ortho" w={28} on /><S n="polar" w={32} /><C w={18} /><S n="iso" w={32} /><C w={17} /></Group>
        <Group><S n="track" on /></Group>
        <Group><S n="osnap" w={28} on /><C w={19} /></Group>
        <Group><S n="lineweight" on /></Group>
        <Group><S n="checker" /></Group>
        <Group><S n="cycle" w={30} /></Group>
        <Group><S n="osnap3d" /><C w={20} /></Group>
        <Group><S n="ucs" on /><S n="filter3d" w={31} /><C w={18} /></Group>
        <Group><S n="gizmo" on /><C w={20} /></Group>
        <Group><S n="annoVis" w={30} /><S n="annoAuto" w={30} /><S n="anno" w={30} /><Flat $w={72}>1:1 / 100%</Flat><C w={19} /></Group>
        <Group><S n="gear" w={32} /><C w={17} /></Group>
        <Group><S n="plus" w={30} /></Group>
        <Group><S n="ruler" w={32} /><Units aria-label="units"><option>小数</option></Units><C w={18} /></Group>
        <Group><S n="quickProps" w={30} /></Group>
        <Group><S n="lockUi" w={30} /><C w={19} /></Group>
        <Group><S n="isolate" w={30} /></Group>
        <Group><S n="perf" w={30} on /></Group>
        <Group $grow><S n="clean" w={35} /></Group>
      </StatusBar>
      <TaskBar>
        <TaskSearch>
          <input aria-label="搜索" placeholder="搜索" />
          <GameArt />
        </TaskSearch>
        <TaskApp aria-label="AutoCAD"><Icon name="autocad" size={30} /></TaskApp>
        <Tray>
          <Battery>37%</Battery>
          <S n="chevronUp" w={38} />
          <S n="smile" w={20} />
          <Lang>英</Lang>
          <S n="sogou" w={32} />
          <Clock>19:26<br />2023/11</Clock>
        </Tray>
      </TaskBar>
    </Page>
  );
}
